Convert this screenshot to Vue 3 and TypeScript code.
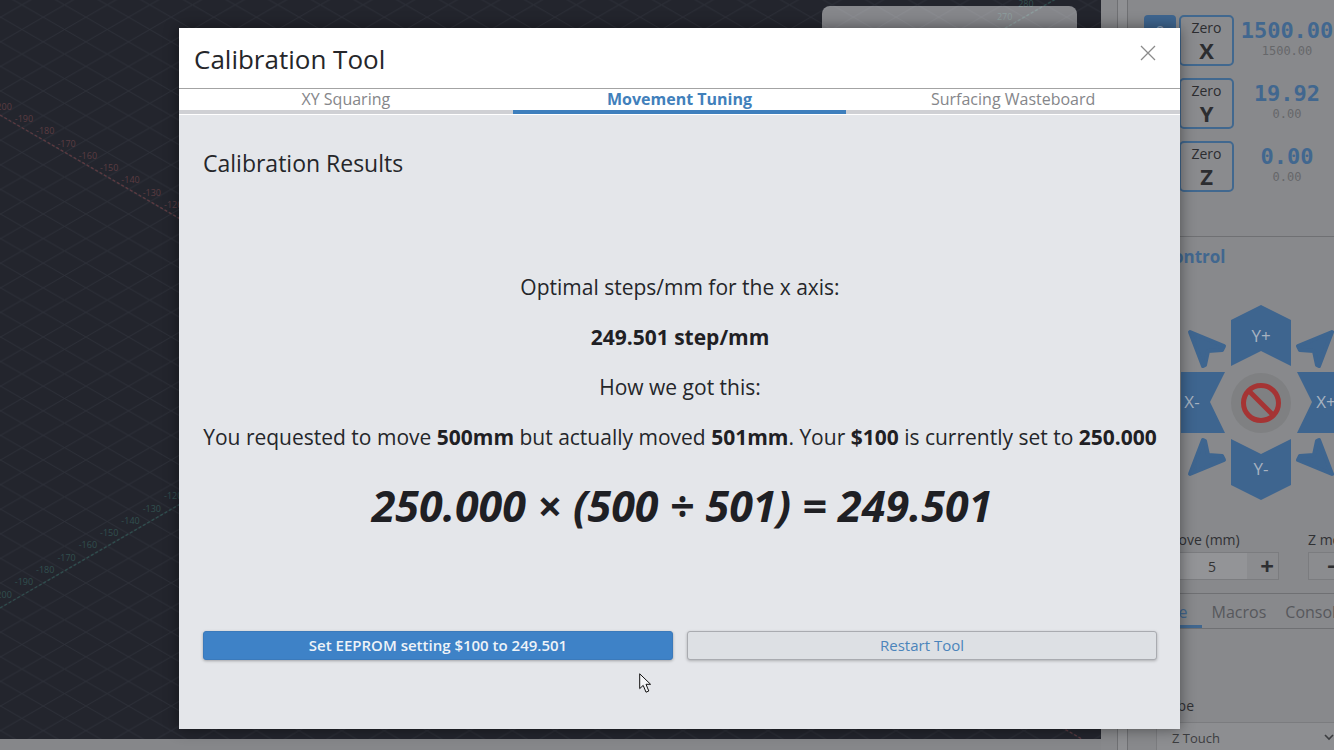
<script setup lang="ts">
const originX = 427
const originY = 361.6
const stepX = 21.32
const stepY = 12.3

const units = [-20, -19, -18, -17, -16, -15, -14, -13, -12]
const redLabels = units.map((u) => ({
  text: String(u * 10),
  x: originX + stepX * u + 2,
  y: originY + stepY * u - 6
}))
const greenLabels = [...units, 27, 28].map((u) => ({
  text: String(u * 10),
  x: originX + stepX * u + 2,
  y: originY - stepY * u - 10
}))

const axes = [
  { name: 'X', value: '1500.00', machine: '1500.00' },
  { name: 'Y', value: '19.92', machine: '0.00' },
  { name: 'Z', value: '0.00', machine: '0.00' }
]
const tabs = [
  { label: 'XY Squaring', active: false },
  { label: 'Movement Tuning', active: true },
  { label: 'Surfacing Wasteboard', active: false }
]
const arrow = '-71,-71 -37,-57 -39,-53 -53,-52 -56,-38 -58,-37'
const corners = [
  'translate(80 98)',
  'translate(80 98) scale(-1 1)',
  'translate(80 98) scale(1 -1)',
  'translate(80 98) scale(-1 -1)'
]
</script>

<template>
  <div class="page">
    <main class="stage">
      <div class="viewport">
        <svg class="grid" width="1101" height="739">
          <defs>
            <pattern id="iso" patternUnits="userSpaceOnUse" :x="originX" :y="originY" width="42.64" height="24.6">
              <path d="M0 0 42.64 24.6M0 24.6 42.64 0" stroke="#2f323a" stroke-width="0.9" fill="none" />
            </pattern>
          </defs>
          <rect width="1101" height="739" fill="url(#iso)" />
          <line x1="0" y1="115" x2="1101" y2="750" class="axis-red" />
          <line x1="0" y1="608" x2="1101" y2="-27" class="axis-green" />
          <text v-for="l in redLabels" :key="'r' + l.text" :x="l.x" :y="l.y" class="label-red">{{ l.text }}</text>
          <text v-for="l in greenLabels" :key="'g' + l.text" :x="l.x" :y="l.y" class="label-green">{{ l.text }}</text>
        </svg>
        <div class="floating"></div>
      </div>
      <div class="footer-bar"></div>
    </main>

    <aside class="side">
      <div class="rail"></div>
      <div class="rail-narrow"></div>
      <div class="controls">
        <section class="dro">
          <div v-for="(a, i) in axes" :key="a.name" class="dro-row">
            <button class="lock" :class="{ hidden: i > 0 }">?</button>
            <button class="zero"><span>Zero</span><b>{{ a.name }}</b></button>
            <div class="readout">
              <strong>{{ a.value }}</strong>
              <small>{{ a.machine }}</small>
            </div>
          </div>
        </section>
        <h3 class="section-head">Jog Control</h3>
        <svg class="jog" width="206" height="195" viewBox="0 0 206 195">
          <g fill="#3e658f">
            <polygon points="80,0 110,15 110,61 80,46 50,61 50,15" />
            <polygon points="50,134 80,149 110,134 110,180 80,195 50,180" />
            <polygon points="0,67 44,67 29,97 44,128 0,128" />
            <polygon points="116,67 206,67 206,128 116,128 131,97" />
            <g v-for="t in corners" :key="t" :transform="t">
              <polygon :points="arrow" stroke="#3e658f" stroke-width="4" stroke-linejoin="round" />
            </g>
          </g>
          <text x="80" y="37" class="jog-label">Y+</text>
          <text x="80" y="170" class="jog-label">Y-</text>
          <text x="11" y="103" class="jog-label">X-</text>
          <text x="145" y="103" class="jog-label">X+</text>
          <circle cx="80" cy="98" r="30" fill="#7f8082" />
          <circle cx="80" cy="98" r="17.5" fill="none" stroke="#a53434" stroke-width="5" />
          <line x1="68" y1="86" x2="92" y2="110" stroke="#a53434" stroke-width="5" />
        </svg>
        <div class="steps">
          <div class="step">
            <label>Move (mm)</label>
            <div class="stepper">
              <button class="minus">−</button>
              <input value="5" readonly />
              <button class="plus">+</button>
            </div>
          </div>
          <div class="step step-z">
            <label>Z move (mm)</label>
            <div class="stepper">
              <button class="minus">−</button>
              <input value="5" readonly />
              <button class="plus">+</button>
            </div>
          </div>
        </div>
        <nav class="side-tabs">
          <span class="current">Probe</span>
          <span class="macros">Macros</span>
          <span class="console">Console</span>
        </nav>
        <div class="probe">
          <label>Probe</label>
          <div class="select">
            <span>Z Touch</span>
            <svg width="10" height="7" viewBox="0 0 10 7"><path d="M1 1l4 4 4-4" fill="none" stroke="#3c3d40" stroke-width="1.6" /></svg>
          </div>
        </div>
      </div>
    </aside>

    <section class="modal">
      <header class="modal-head">
        <h1>Calibration Tool</h1>
        <svg class="close" width="16" height="16" viewBox="0 0 16 16">
          <path d="M1 1l14 14M15 1 1 15" stroke="#8b8b8b" stroke-width="1.3" fill="none" />
        </svg>
      </header>
      <nav class="tabs">
        <div v-for="t in tabs" :key="t.label" class="tab" :class="{ active: t.active }">{{ t.label }}</div>
      </nav>
      <div class="modal-body">
        <h2>Calibration Results</h2>
        <div class="results">
          <p>Optimal steps/mm for the x axis:</p>
          <p><b>249.501 step/mm</b></p>
          <p>How we got this:</p>
          <p>You requested to move <b>500mm</b> but actually moved <b>501mm</b>. Your <b>$100</b> is currently set to <b>250.000</b></p>
          <p class="equation">250.000 × (500 ÷ 501) = 249.501</p>
        </div>
        <div class="actions">
          <button class="primary">Set EEPROM setting $100 to 249.501</button>
          <button class="secondary">Restart Tool</button>
        </div>
      </div>
    </section>

    <svg class="pointer" width="14" height="21" viewBox="0 0 14 21">
      <path d="M.7.8V15.6L4.2 12.4 7 19.2 9.8 18 7 11.3H11.6Z" fill="#f4f5f7" stroke="#111" stroke-width="1" stroke-linejoin="round" />
    </svg>
  </div>
</template>

<style>
html, body { margin: 0; background: #23252d; }
</style>

<style scoped>
.page {
  position: relative;
  display: flex;
  width: 1334px;
  height: 750px;
  overflow: hidden;
  font-family: "Open Sans", sans-serif;
  color: #212226;
}
.stage { width: 1101px; display: flex; flex-direction: column; }
.viewport { position: relative; height: 739px; background: #23252d; }
.grid { display: block; }
.axis-red { stroke: #5b3a40; stroke-width: 1.4; stroke-dasharray: 3 2; }
.axis-green { stroke: #2f4d4d; stroke-width: 1.4; stroke-dasharray: 3 2; }
.label-red, .label-green { font-size: 9px; font-family: "Open Sans", sans-serif; text-anchor: middle; }
.label-red { fill: #5b3c42; }
.label-green { fill: #32504f; }
.floating {
  position: absolute;
  left: 822px;
  top: 6px;
  width: 255px;
  height: 60px;
  border-radius: 8px;
  background: rgba(255, 255, 255, 0.45);
}
.footer-bar { height: 11px; background: #86878a; }

.side { width: 233px; flex: none; display: flex; background: #88898c; }
.rail { width: 16px; flex: none; }
.rail-narrow { width: 9px; flex: none; border-left: 1px solid #6f7073; border-right: 1px solid #6f7073; background: #8f9093; }
.controls { width: 206px; flex: none; overflow: hidden; }

.dro { height: 237px; padding: 15px 0 0 16px; box-sizing: border-box; display: flex; flex-direction: column; gap: 12px; border-bottom: 1px solid #6f7073; }
.dro-row { display: flex; height: 51px; flex: none; align-items: stretch; }
.lock { width: 32px; height: 32px; flex: none; margin-right: 3px; border: none; border-radius: 4px; background: #3e658f; color: #8ea5bf; font-size: 14px; padding: 0; }
.lock.hidden { visibility: hidden; }
.zero {
  width: 55px;
  flex: none;
  box-sizing: border-box;
  border: 2px solid #41688f;
  border-radius: 5px;
  background: #8a8b8e;
  padding: 0;
  display: flex;
  flex-direction: column;
  align-items: center;
  font-family: "Open Sans", sans-serif;
  color: #2c2d30;
}
.zero span { font-size: 14px; line-height: 20px; margin-top: 1px; }
.zero b { font-size: 22px; line-height: 24px; }
.readout { flex: none; width: 100px; margin-left: 3px; display: flex; flex-direction: column; align-items: center; font-family: "DejaVu Sans Mono", monospace; white-space: nowrap; }
.readout strong { font-size: 22px; line-height: 28px; margin-top: 2px; color: #41678f; }
.readout small { font-size: 12px; line-height: 14px; margin-top: -1px; color: #66676a; }

.section-head { margin: 0; height: 33px; font-size: 17px; line-height: 40px; font-weight: 700; color: #41678f; white-space: nowrap; text-indent: 4px; }
.jog { display: block; margin: 35px 0 0 53px; overflow: hidden; }
.jog-label { font-size: 17px; font-family: "Open Sans", sans-serif; fill: #a7b2c0; text-anchor: middle; }

.steps { display: flex; gap: 29px; margin-top: 30px; padding-left: 17px; }
.step { flex: none; width: 134px; }
.step label { display: block; font-size: 14px; line-height: 20px; color: #303134; padding-left: 21px; white-space: nowrap; }
.step-z label { padding-left: 0; }
.stepper { display: flex; height: 28px; margin-top: 2px; background: #8f9093; border: 1px solid #7b7c7f; box-sizing: border-box; }
.stepper input { width: 70px; flex: none; border: none; background: #939497; text-align: center; font-size: 14px; font-family: "Open Sans", sans-serif; color: #333; padding: 0; outline: none; }
.stepper button { width: 31px; flex: none; border: none; background: #8b8c8f; font-size: 24px; line-height: 1; font-weight: 700; color: #2e2f32; padding: 0; font-family: "Open Sans", sans-serif; }
.stepper .plus { padding-left: 9px; }
.step-z .minus { padding-left: 18px; }

.side-tabs { display: flex; margin-top: 13px; height: 34px; padding-left: 15px; border-top: 1px solid #6f7073; border-bottom: 1px solid #6f7073; font-size: 16px; line-height: 36px; color: #57585c; white-space: nowrap; }
.side-tabs .current { color: #41678f; height: 31px; border-bottom: 3px solid #41678f; padding-right: 14px; }
.side-tabs .macros { margin-left: 10px; }
.side-tabs .console { margin-left: 19px; }
.probe { padding-top: 67px; }
.probe label { display: block; font-size: 14px; line-height: 20px; color: #303134; padding-left: 27px; }
.select { display: flex; align-items: center; justify-content: space-between; margin: 6px 0 0 28px; height: 32px; padding: 0 0 2px 15px; border-left: 1px solid #7b7c7f; border-top: 1px solid #7b7c7f; background: #8d8e91; font-size: 13px; color: #3c3d40; box-sizing: border-box; }

.modal {
  position: absolute;
  left: 179px;
  top: 28px;
  width: 1001px;
  height: 701px;
  display: flex;
  flex-direction: column;
  background: #e4e6ea;
  box-shadow: 0 0 14px rgba(0, 0, 0, 0.45);
}
.modal-head { height: 61px; box-sizing: border-box; display: flex; align-items: center; justify-content: space-between; padding: 1px 24px 0 15px; background: #fff; border-bottom: 1px solid #a3a3a3; flex: none; }
.modal-head h1 { margin: 0; font-size: 26px; font-weight: 400; color: #25262a; line-height: 60px; }
.close { margin-top: -11px; }
.tabs { display: grid; grid-template-columns: repeat(3, 1fr); height: 26px; flex: none; background: #fff; padding-bottom: 1px; box-sizing: border-box; }
.tab { font-size: 16px; line-height: 21px; text-align: center; color: #85868a; border-bottom: 4px solid #cfd0d4; }
.tab.active { font-weight: 700; color: #4180bb; border-bottom-color: #3e7fbd; }
.modal-body { flex: 1; display: flex; flex-direction: column; padding: 0 23px 0 24px; }
.modal-body h2 { margin: 32px 0 0; font-size: 23px; line-height: 32px; font-weight: 400; color: #25262a; }
.results { margin-top: 83px; text-align: center; font-size: 21px; color: #25262a; white-space: nowrap; }
.results p { margin: 0; height: 50px; line-height: 50px; }
.results b { font-weight: 700; color: #1f2024; }
.results .equation { margin-top: 14px; padding-left: 4px; height: 60px; line-height: 60px; font-size: 43px; font-weight: 700; font-style: italic; color: #1f2024; }
.actions { display: grid; grid-template-columns: 1fr 1fr; gap: 14px; margin-top: 95px; }
.actions button { height: 29px; border-radius: 3px; font-family: "Open Sans", sans-serif; font-size: 15px; padding: 0 0 2px; }
.primary { background: #3e82c7; border: 1px solid #3b7abb; color: #eef3f8; font-weight: 600; box-shadow: 0 1px 3px rgba(0, 0, 0, 0.3); }
.secondary { background: #dde0e4; border: 1px solid #a9abb0; color: #4b84bb; box-shadow: 0 1px 3px rgba(0, 0, 0, 0.25); }
.pointer { position: absolute; left: 639px; top: 673px; }
</style>
